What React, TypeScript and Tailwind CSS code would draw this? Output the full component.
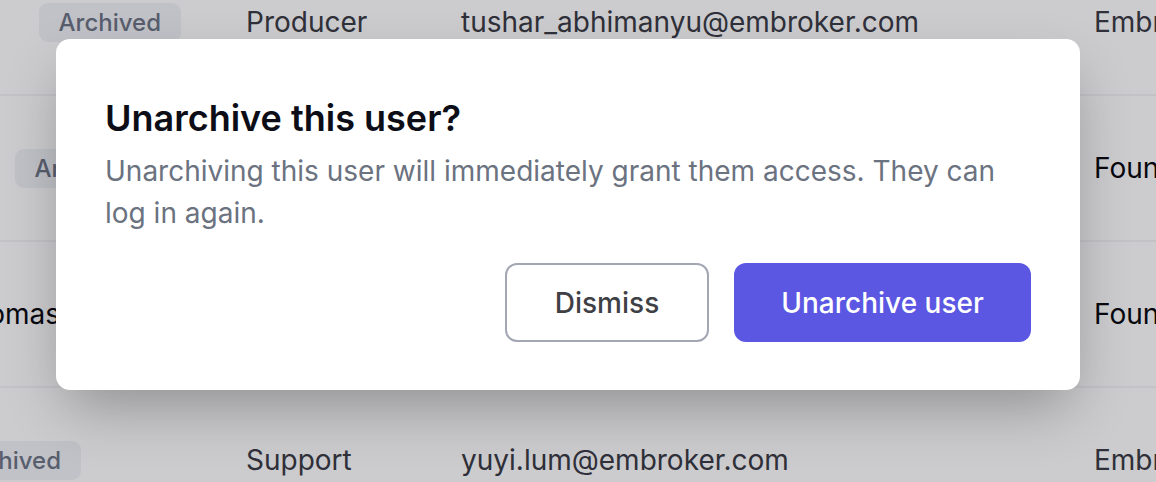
const rows = [
  {
    lead: "",
    badge: true,
    pad: "pr-[65px]",
    role: "Producer",
    email: "tushar_abhimanyu@embroker.com",
    org: "Embroker",
    dark: false,
  },
  {
    lead: "",
    badge: true,
    pad: "pr-[89px]",
    role: "",
    email: "",
    org: "Founder Co",
    dark: true,
  },
  {
    lead: "Thomas",
    badge: false,
    pad: "pr-[186px]",
    role: "",
    email: "",
    org: "Founder Co",
    dark: true,
  },
  {
    lead: "",
    badge: true,
    pad: "pr-[165px]",
    role: "Support",
    email: "yuyi.lum@embroker.com",
    org: "Embroker",
    dark: false,
  },
];

const App = () => {
  return (
    <div className="relative h-[482px] w-[1156px] overflow-hidden bg-white font-['Inter',sans-serif]">
      {/* Users table behind the dialog */}
      <div className="-mt-[50px] flex flex-col">
        {rows.map((row, i) => (
          <div
            key={i}
            className="flex h-[146px] shrink-0 items-center border-b-2 border-[#f4f4f6] text-[28px] text-[#3b3c44]"
          >
            <div className={`flex w-[246px] shrink-0 items-center justify-end overflow-hidden whitespace-nowrap ${row.pad}`}>
              {row.lead && <span className="text-[#0a0a0f]">{row.lead}</span>}
              {row.badge && (
                <span className="h-[39px] rounded-[9px] bg-[#f2f3f6] px-[20px] text-[24px] font-medium leading-[39px] text-[#6e7685]">
                  Archived
                </span>
              )}
            </div>
            <div className="w-[215px] shrink-0 whitespace-nowrap">{row.role}</div>
            <div className="w-[633px] shrink-0 whitespace-nowrap">{row.email}</div>
            <div className={`whitespace-nowrap ${row.dark ? "text-[#0a0a0f]" : ""}`}>{row.org}</div>
          </div>
        ))}
      </div>

      {/* Overlay + dialog */}
      <div className="absolute inset-0 bg-[rgba(0,0,16,0.2)]">
        <div className="ml-[56px] mt-[39px] w-[1024px] rounded-[14px] bg-white px-[49px] pb-[48px] pt-[57px] shadow-[0_25px_60px_-10px_rgba(0,0,0,0.3)]">
          <h2 className="text-[36px] font-semibold leading-[44px] text-[#0c0d16]">Unarchive this user?</h2>
          <p className="mt-[10px] text-[28px] leading-[42px] text-[#6b7280]">
            Unarchiving this user will immediately grant them access. They can log in again.
          </p>
          <div className="mt-[29px] flex justify-end gap-[25px]">
            <button className="h-[79px] w-[204px] rounded-[12px] border-2 border-[#a3a7b4] bg-white text-[28px] font-medium text-[#3f3f46]">
              Dismiss
            </button>
            <button className="h-[79px] w-[297px] rounded-[12px] bg-[#5b57e3] text-[28px] font-medium text-white">
              Unarchive user
            </button>
          </div>
        </div>
      </div>
    </div>
  );
};

export default App;
